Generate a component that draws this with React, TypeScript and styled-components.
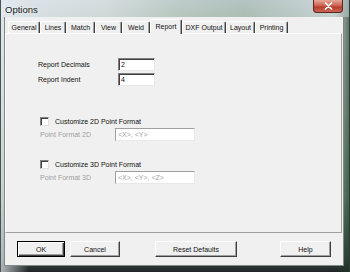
import styled, { createGlobalStyle } from "styled-components";

const GlobalStyle = createGlobalStyle`
  html, body {
    margin: 0;
    padding: 0;
    background: #55675f;
  }
  body {
    font-family: "Liberation Sans", Arial, sans-serif;
    font-size: 7px;
    color: #111;
  }
`;

const tabs = [
  { label: "General", width: 32 },
  { label: "Lines", width: 26 },
  { label: "Match", width: 29 },
  { label: "View", width: 27 },
  { label: "Weld", width: 28 },
  { label: "Report", width: 32, active: true },
  { label: "DXF Output", width: 44 },
  { label: "Layout", width: 29 },
  { label: "Printing", width: 33 },
];

export default function App() {
  return (
    <>
      <GlobalStyle />
      <Window>
        <TitleBar>
          <Title>Options</Title>
          <CloseButton aria-label="close">
            <svg width="9" height="8" viewBox="0 0 9 8">
              <path d="M1.5 1 L7.5 7 M7.5 1 L1.5 7" stroke="#fff" strokeWidth="1.7" strokeLinecap="round" />
            </svg>
          </CloseButton>
        </TitleBar>
        <Frame>
          <Client>
            <TabStrip>
              {tabs.map((t) => (
                <Tab key={t.label} $width={t.width} $active={!!t.active}>
                  {t.label}
                </Tab>
              ))}
            </TabStrip>
            <Panel>
              <FieldGrid>
                <Label>Report Decimals</Label>
                <TextBox>2</TextBox>
                <Label>Report Indent</Label>
                <TextBox>4</TextBox>
              </FieldGrid>

              <Section $top={29}>
                <CheckRow>
                  <CheckBox />
                  <span>Customize 2D Point Format</span>
                </CheckRow>
                <FormatRow>
                  <Label $disabled>Point Format 2D</Label>
                  <TextBox $disabled>&lt;X&gt;, &lt;Y&gt;</TextBox>
                </FormatRow>
              </Section>

              <Section $top={17}>
                <CheckRow>
                  <CheckBox />
                  <span>Customize 3D Point Format</span>
                </CheckRow>
                <FormatRow>
                  <Label $disabled>Point Format 3D</Label>
                  <TextBox $disabled>&lt;X&gt;, &lt;Y&gt;, &lt;Z&gt;</TextBox>
                </FormatRow>
              </Section>
            </Panel>
            <ButtonRow>
              <Button $width={48} $default>OK</Button>
              <Button $width={50}>Cancel</Button>
              <Button $width={82} className="reset">Reset Defaults</Button>
              <Button $width={51} className="help">Help</Button>
            </ButtonRow>
          </Client>
        </Frame>
      </Window>
    </>
  );
}

const Window = styled.div`
  width: 350px;
  height: 272px;
  box-sizing: border-box;
  display: flex;
  flex-direction: column;
  border-left: 1px solid #4a5456;
  border-right: 1px solid #2f3a36;
  background:
    linear-gradient(90deg, rgba(235, 240, 245, 0.7) 0%, rgba(235, 240, 245, 0) 8%),
    linear-gradient(270deg, rgba(30, 60, 40, 0.6) 0%, rgba(30, 60, 40, 0) 4%),
    linear-gradient(
      180deg,
      #d3dce3 0%,
      #c6d1cf 6%,
      #a9b8ae 40%,
      #7d927f 72%,
      #3a4744 95%,
      #1f2526 100%
    );
`;

const TitleBar = styled.div`
  height: 17px;
  display: flex;
  align-items: flex-start;
  justify-content: space-between;
  padding: 0 6px 0 4px;
  background: linear-gradient(
    90deg,
    rgba(225, 232, 240, 0.7) 0%,
    rgba(215, 222, 220, 0.5) 30%,
    rgba(150, 175, 155, 0.35) 52%,
    rgba(120, 150, 130, 0.35) 70%,
    rgba(205, 215, 215, 0.5) 100%
  );
`;

const Title = styled.div`
  font-size: 9.5px;
  line-height: 12px;
  margin-top: 4px;
  color: #1a1a1a;
  text-shadow: 0 0 4px rgba(255, 255, 255, 0.9);
`;

const CloseButton = styled.div`
  width: 30px;
  height: 13px;
  box-sizing: border-box;
  display: flex;
  align-items: center;
  justify-content: center;
  border: 1px solid #5a2520;
  border-top: none;
  border-radius: 0 0 4px 4px;
  background: linear-gradient(180deg, #e6a898 0%, #cf6353 45%, #b5402f 60%, #cc6654 100%);
`;

const Frame = styled.div`
  flex: 1;
  display: flex;
  padding: 0 5px 6px 3px;
`;

const Client = styled.div`
  flex: 1;
  display: flex;
  flex-direction: column;
  background: #f0f0f0;
  border: 1px solid #7d8a88;
  border-top: none;
  box-sizing: border-box;
`;

const TabStrip = styled.div`
  display: flex;
  align-items: flex-end;
  height: 15px;
  margin-top: 2px;
  margin-bottom: -1px;
  padding-left: 3px;
  position: relative;
  z-index: 1;
`;

const Tab = styled.div<{ $width: number; $active: boolean }>`
  width: ${(p) => p.$width}px;
  height: ${(p) => (p.$active ? 15 : 12)}px;
  margin-bottom: ${(p) => (p.$active ? 0 : 1)}px;
  box-sizing: border-box;
  display: flex;
  align-items: center;
  justify-content: center;
  padding-bottom: ${(p) => (p.$active ? 2 : 0)}px;
  white-space: nowrap;
  background: #f0f0f0;
  border-top: 1px solid #fff;
  border-left: 1px solid #fff;
  border-right: 1px solid #404040;
  box-shadow: inset -1px 0 #a0a0a0;
  border-radius: 2px 2px 0 0;
`;

const Panel = styled.div`
  height: 200px;
  box-sizing: border-box;
  margin: 0 1px 0 0;
  display: flex;
  flex-direction: column;
  padding: 24px 0 0 32px;
  border-top: 1px solid #fff;
  border-left: 1px solid #fff;
  border-right: 1px solid #a0a0a0;
  border-bottom: 1px solid #a0a0a0;
`;

const FieldGrid = styled.div`
  display: grid;
  grid-template-columns: 80px 37px;
  grid-auto-rows: 13px;
  row-gap: 2px;
  align-items: center;
`;

const Label = styled.span<{ $disabled?: boolean }>`
  color: ${(p) => (p.$disabled ? "#a0a0a0" : "#111")};
  white-space: nowrap;
`;

const TextBox = styled.div<{ $disabled?: boolean }>`
  height: 13px;
  box-sizing: border-box;
  display: flex;
  align-items: center;
  padding-left: 2px;
  background: #fff;
  color: ${(p) => (p.$disabled ? "#a0a0a0" : "#111")};
  border-top: 1px solid ${(p) => (p.$disabled ? "#a0a0a0" : "#808080")};
  border-left: 1px solid ${(p) => (p.$disabled ? "#a0a0a0" : "#808080")};
  border-right: 1px solid #e8e8e8;
  border-bottom: 1px solid #e8e8e8;
  box-shadow: ${(p) => (p.$disabled ? "none" : "inset 1px 1px #404040")};
  white-space: nowrap;
`;

const Section = styled.div<{ $top: number }>`
  display: flex;
  flex-direction: column;
  gap: 1px;
  margin-top: ${(p) => p.$top}px;
  padding-left: 2px;
`;

const CheckRow = styled.label`
  height: 12px;
  display: flex;
  align-items: center;
  gap: 6px;
`;

const CheckBox = styled.span`
  width: 7px;
  height: 7px;
  background: #fff;
  border-top: 1px solid #808080;
  border-left: 1px solid #808080;
  border-right: 1px solid #e0e0e0;
  border-bottom: 1px solid #e0e0e0;
  box-shadow: inset 1px 1px #404040;
`;

const FormatRow = styled.div`
  display: grid;
  grid-template-columns: 75px 80px;
  align-items: center;
`;

const ButtonRow = styled.div`
  flex: 1;
  display: flex;
  align-items: flex-start;
  gap: 5px;
  padding: 8px 12px 0 12px;

  .reset {
    margin-left: 30px;
  }

  .help {
    margin-left: auto;
  }
`;

const Button = styled.div<{ $width: number; $default?: boolean }>`
  width: ${(p) => p.$width}px;
  height: 16px;
  box-sizing: border-box;
  display: flex;
  align-items: center;
  justify-content: center;
  background: #f0f0f0;
  border: 1px solid;
  border-color: ${(p) => (p.$default ? "#000" : "#fff #404040 #404040 #fff")};
  box-shadow: ${(p) =>
    p.$default
      ? "inset 1px 1px #fff, inset -1px -1px #404040, inset -2px -2px #a0a0a0"
      : "inset -1px -1px #a0a0a0"};
`;
